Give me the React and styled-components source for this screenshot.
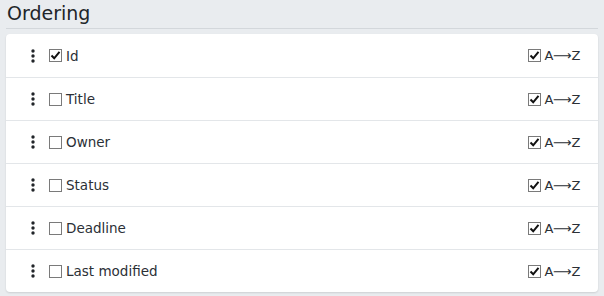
import styled, { createGlobalStyle } from 'styled-components';

const GlobalStyle = createGlobalStyle`
  html, body {
    margin: 0;
    padding: 0;
    background-color: #e9ecef;
  }
  body {
    font-family: "DejaVu Sans", Verdana, sans-serif;
    color: #212529;
  }
`;

const Page = styled.div`
  width: 604px;
  height: 296px;
  padding: 0 6px 0 6px;
  box-sizing: border-box;
`;

const Heading = styled.h2`
  margin: 0;
  padding: 3px 1px 4px;
  font-family: "DejaVu Sans", Verdana, sans-serif;
  font-weight: 400;
  font-size: 19px;
  line-height: 21px;
  color: #212529;
  border-bottom: 1px solid #d3d7db;
`;

const Card = styled.ul`
  list-style: none;
  margin: 5px 0 0;
  padding: 0;
  background-color: #fff;
  border-radius: 4px;
  box-shadow: 0 1px 2px rgba(0, 0, 0, 0.12);
`;

const Row = styled.li`
  display: flex;
  align-items: center;
  height: 43px;
  padding: 0 18px 0 25px;
  box-sizing: border-box;
  border-top: ${({ $first }) => ($first ? 'none' : '1px solid #e3e6e9')};
  font-size: 13.5px;
`;

const Handle = styled.svg`
  width: 4px;
  height: 14px;
  margin-right: 14px;
  flex-shrink: 0;
`;

const Box = styled.span`
  display: inline-flex;
  align-items: center;
  justify-content: center;
  width: 13px;
  height: 13px;
  box-sizing: border-box;
  border: 1px solid #7a7a7a;
  background-color: #fff;
  margin-right: ${({ $tight }) => ($tight ? '3px' : '4px')};
  flex-shrink: 0;
`;

const Label = styled.span`
  flex: 1;
  color: #2b3036;
`;

const Sort = styled.span`
  display: flex;
  align-items: center;
  font-size: 13px;
  letter-spacing: -0.3px;
  color: #2b3036;
`;

function DragHandle() {
  return (
    <Handle viewBox="0 0 4 14">
      <circle cx="2" cy="2" r="1.7" fill="#212529" />
      <circle cx="2" cy="7" r="1.7" fill="#212529" />
      <circle cx="2" cy="12" r="1.7" fill="#212529" />
    </Handle>
  );
}

function Checkbox({ checked, tight }) {
  return (
    <Box $tight={tight}>
      {checked && (
        <svg width="11" height="11" viewBox="0 0 11 11">
          <path d="M1.5 5.5 L4.2 8.3 L9.5 1.8" fill="none" stroke="#111" strokeWidth="2" />
        </svg>
      )}
    </Box>
  );
}

const fields = [
  { name: 'Id', checked: true },
  { name: 'Title', checked: false },
  { name: 'Owner', checked: false },
  { name: 'Status', checked: false },
  { name: 'Deadline', checked: false },
  { name: 'Last modified', checked: false },
];

export default function App() {
  return (
    <Page>
      <GlobalStyle />
      <Heading>Ordering</Heading>
      <Card>
        {fields.map((f, i) => (
          <Row key={f.name} $first={i === 0}>
            <DragHandle />
            <Checkbox checked={f.checked} />
            <Label>{f.name}</Label>
            <Sort>
              <Checkbox checked tight />
              A⟶Z
            </Sort>
          </Row>
        ))}
      </Card>
    </Page>
  );
}
